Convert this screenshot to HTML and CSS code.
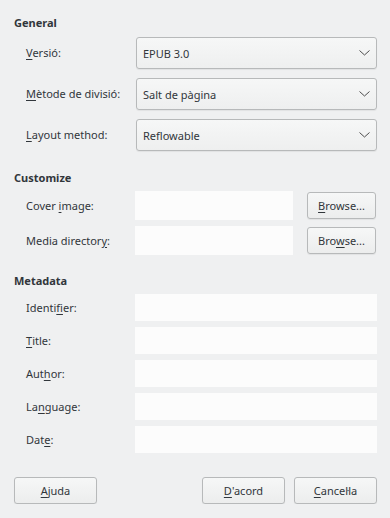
FILE: index.html
```html
<!DOCTYPE html>
<html lang="ca">
<head>
    <meta charset="UTF-8">
    <meta name="viewport" content="width=device-width, initial-scale=1.0">
    <title>EPUB Export</title>
    <link rel="stylesheet" href="styles.css">
</head>
<body>
    <div class="dialog">
        <section class="group">
            <h2 class="group-title">General</h2>
            <div class="rows rows-select">
                <label class="label"><u>V</u>ersió:</label>
                <div class="select">
                    <span>EPUB 3.0</span>
                    <svg class="chevron" width="11" height="6" viewBox="0 0 11 6"><path d="M0.5 0.5 L5.5 5 L10.5 0.5" fill="none" stroke="#4d4d4d" stroke-width="1"/></svg>
                </div>

                <label class="label"><u>M</u>ètode de divisió:</label>
                <div class="select">
                    <span>Salt de pàgina</span>
                    <svg class="chevron" width="11" height="6" viewBox="0 0 11 6"><path d="M0.5 0.5 L5.5 5 L10.5 0.5" fill="none" stroke="#4d4d4d" stroke-width="1"/></svg>
                </div>

                <label class="label"><u>L</u>ayout method:</label>
                <div class="select">
                    <span>Reflowable</span>
                    <svg class="chevron" width="11" height="6" viewBox="0 0 11 6"><path d="M0.5 0.5 L5.5 5 L10.5 0.5" fill="none" stroke="#4d4d4d" stroke-width="1"/></svg>
                </div>
            </div>
        </section>

        <section class="group">
            <h2 class="group-title">Customize</h2>
            <div class="rows rows-browse">
                <label class="label">Cover <u>i</u>mage:</label>
                <div class="field"></div>
                <button class="button browse"><u>B</u>rowse...</button>

                <label class="label">Media director<u>y</u>:</label>
                <div class="field"></div>
                <button class="button browse">Bro<u>w</u>se...</button>
            </div>
        </section>

        <section class="group">
            <h2 class="group-title">Metadata</h2>
            <div class="rows rows-meta">
                <label class="label">Identi<u>fi</u>er:</label>
                <div class="field"></div>
                <label class="label"><u>T</u>itle:</label>
                <div class="field"></div>
                <label class="label">Aut<u>h</u>or:</label>
                <div class="field"></div>
                <label class="label">La<u>n</u>guage:</label>
                <div class="field"></div>
                <label class="label">Dat<u>e</u>:</label>
                <div class="field"></div>
            </div>
        </section>

        <div class="actions">
            <button class="button action"><u>A</u>juda</button>
            <div class="spacer"></div>
            <button class="button action"><u>D</u>'acord</button>
            <button class="button action"><u>C</u>ancel·la</button>
        </div>
    </div>
</body>
</html>
```

FILE: styles.css
```css
:root {
    --window-bg: #eff0f1;
    --field-bg: #fcfcfc;
    --text-color: #31363b;
    --border-color: #b7b9ba;
    --radius: 3px;
}

body {
    margin: 0;
    background-color: var(--window-bg);
    color: var(--text-color);
    font-family: 'Noto Sans', sans-serif;
    font-size: 11px;
}

.dialog {
    padding: 15px 14px 0 14px;
}

.group-title {
    margin: 0 0 6px 0;
    font-size: 11px;
    font-weight: bold;
    line-height: 16px;
}

.group + .group {
    margin-top: 19px;
}

.group:nth-child(3) {
    margin-top: 18px;
}

.rows {
    display: grid;
    grid-template-columns: 110px 1fr;
    align-items: center;
    padding-left: 12px;
}

.rows-select {
    grid-auto-rows: 32px;
    row-gap: 9px;
}

.rows-browse {
    grid-template-columns: 109px 1fr 69px;
    grid-auto-rows: 29px;
    row-gap: 6px;
    margin-top: -1px;
}

.rows-browse .field {
    margin-right: 14px;
}

.rows-meta {
    grid-template-columns: 109px 1fr;
    grid-auto-rows: 27px;
    row-gap: 6px;
    margin-top: -1px;
    margin-right: -1px;
}

.label {
    line-height: 16px;
}

u {
    text-decoration-thickness: 1px;
    text-underline-offset: 2px;
}

.select {
    height: 32px;
    box-sizing: border-box;
    display: flex;
    align-items: center;
    justify-content: space-between;
    padding: 0 6px 0 6px;
    border: 1px solid var(--border-color);
    border-radius: var(--radius);
    background: linear-gradient(#f6f7f7, #eeefef);
    box-shadow: 0 1px 1px rgba(0,0,0,0.06);
    margin-right: -1px;
}

.chevron {
    display: block;
}

.field {
    height: 100%;
    background-color: var(--field-bg);
}

.button {
    box-sizing: border-box;
    border: 1px solid var(--border-color);
    border-radius: var(--radius);
    background: linear-gradient(#f6f7f7, #eceded);
    box-shadow: 0 1px 1px rgba(0,0,0,0.06);
    color: var(--text-color);
    font-family: 'Noto Sans', sans-serif;
    font-size: 11px;
    padding: 0;
    text-align: center;
}

.browse {
    height: 27px;
    width: 69px;
}

.actions {
    display: flex;
    gap: 9px;
    margin-top: 24px;
    margin-right: -1px;
}

.spacer {
    flex: 1;
}

.action {
    width: 83px;
    height: 27px;
}
```
